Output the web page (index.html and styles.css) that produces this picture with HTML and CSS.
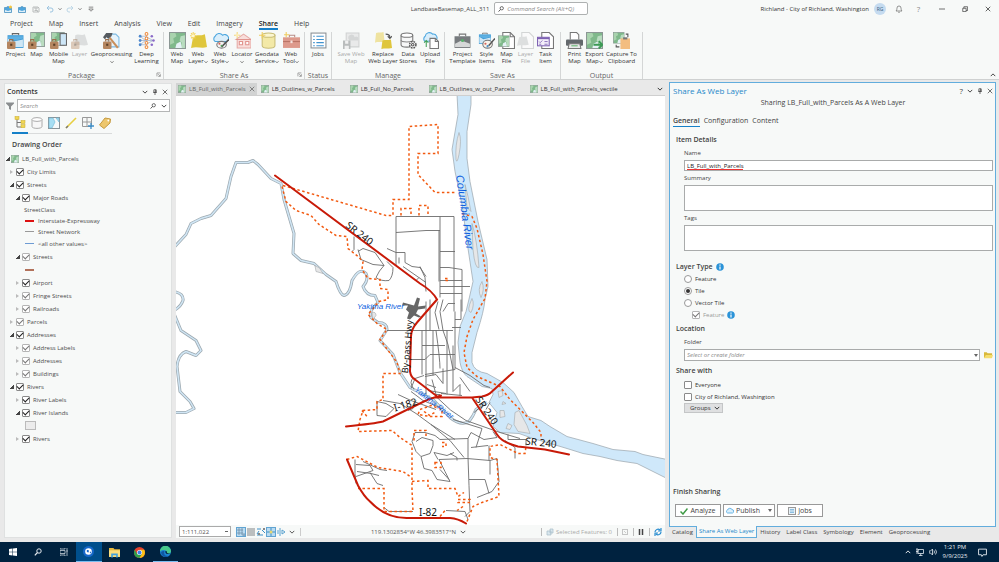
FILE: index.html
```html
<!DOCTYPE html>
<html lang="en">
<head>
<meta charset="utf-8">
<title>LandbaseBasemap_ALL_311</title>
<link rel="stylesheet" href="styles.css">
</head>
<body>
<svg class="defs" aria-hidden="true">
  <symbol id="bag" viewBox="0 0 16 16"><path d="M2.5 9V7.2h3V9" fill="none" stroke="#9a6f4c"/><rect x="0" y="9" width="8" height="7" rx="1" fill="#b58660"/><rect x="3" y="11" width="2" height="2" fill="#5c4028"/></symbol>
  <symbol id="mapsq" viewBox="0 0 16 16"><rect x=".5" y=".5" width="15" height="15" fill="#7fb98b" stroke="#8b9794"/><path d="M1 1h5l1 3-3 2 1 4-4 2z" fill="#a9d3ae"/><path d="M15 3l-4 1-1 4 2 2-1 5h4z" fill="#b9dcc0"/><path d="M6 15l1-4 4-2 1 6z" fill="#e5f1f6"/></symbol>
  <symbol id="project" viewBox="0 0 16 16"><path d="M5 3V1.5h6V3" fill="none" stroke="#666"/><rect x=".5" y="3" width="15" height="12" fill="#3f9bd6"/><path d="M1 6l5 3 9-2v7H1z" fill="#cfe7f5"/><path d="M1 4h14v2L8 8 1 6z" fill="#5eb0e2"/></symbol>
  <symbol id="i-project" viewBox="0 0 16 16"><use href="#project"/><use href="#bag"/></symbol>
  <symbol id="i-map" viewBox="0 0 16 16"><svg x="2" y="0" width="14" height="14"><use href="#mapsq"/></svg><use href="#bag"/></symbol>
  <symbol id="i-mobile" viewBox="0 0 16 16"><svg x="1" y="0" width="13" height="13"><use href="#mapsq"/></svg><rect x="9.500" y="1.500" width="6" height="11" fill="#cde6f7" stroke="#666"/><use href="#bag"/></symbol>
  <symbol id="i-layer" viewBox="0 0 16 16"><path d="M4 3c3-2 6 1 9-1l3 10c-4 2-8-1-13 1z" fill="#dcdede"/><g opacity=".4"><use href="#bag"/></g></symbol>
  <symbol id="i-geo" viewBox="0 0 16 16"><path d="M5 2h7l3 3v9H5z" fill="#e6f3fb" stroke="#7ebce4"/><path d="M6 5l8 10" stroke="#c98f5b" stroke-width="2"/><path d="M0 5l3-4 6 0-1 3-3 2-2-1-1 2z" fill="#555b60"/><use href="#bag"/></symbol>
  <symbol id="i-deep" viewBox="0 0 16 16"><path d="M2 4h5l7 4-7 4H2l5-4zM2 8h12M8 1v14" fill="none" stroke="#a8b7cf" stroke-width=".8"/><g fill="#5089ce"><circle cx="2" cy="4" r="1.300"/><circle cx="2" cy="8" r="1.300"/><circle cx="2" cy="12" r="1.300"/></g><g fill="#fff" stroke="#ee8a3c"><circle cx="8" cy="1.800" r="1.300"/><circle cx="8" cy="6" r="1.300"/><circle cx="8" cy="10.200" r="1.300"/><circle cx="8" cy="14.200" r="1.300"/></g><g fill="#8a6ac8"><circle cx="13" cy="4" r="1.200"/><circle cx="14.600" cy="8" r="1.200"/><circle cx="13" cy="12" r="1.200"/></g></symbol>
  <symbol id="i-weblayer" viewBox="0 0 16 16"><path d="M3 4c4-2 7 0 11-2l2 12c-5 2-9-1-15 1z" fill="#dfc63c"/><path d="M3 0v7M0 3.500h6M1 1l4 5M5 1L1 6" stroke="#f4d35c"/><circle cx="3" cy="3.500" r="1.500" fill="#fff7cf"/></symbol>
  <symbol id="i-webstyle" viewBox="0 0 16 16"><path d="M3 9a3 3 0 0 1 0-5 4 4 0 0 1 7-1 3.500 3.500 0 0 1 4 6z" fill="#d9eefb" stroke="#4ba6df"/><ellipse cx="9" cy="12" rx="4.500" ry="3.200" fill="#f5f5f5" stroke="#777"/><path d="M16 7l-7 7" stroke="#555" stroke-width="1.500"/><circle cx="7" cy="11" r="1" fill="#d76459"/><circle cx="9" cy="13" r="1" fill="#56a05f"/></symbol>
  <symbol id="i-locator" viewBox="0 0 16 16"><path d="M2 7l7-5 7 5v8H3V7z" fill="#f8dedb" stroke="#e6aaa5"/><path d="M2 7h14M5 9h3v3H5zM11 9h3v3h-3z" fill="#fff" stroke="#e1938d"/><path d="M3 0v6M0 3h6" stroke="#f4d67a"/><circle cx="3" cy="3" r="1.400" fill="#fcecb6"/></symbol>
  <symbol id="i-geodata" viewBox="0 0 16 16"><path d="M3 3v10c0 3 12 3 12 0V3z" fill="#f3e9a7" stroke="#c9bd76"/><ellipse cx="9" cy="3" rx="6" ry="2" fill="#fbf6d2" stroke="#c9bd76"/><path d="M3 0v6M0 3h6" stroke="#f0cd5e"/></symbol>
  <symbol id="i-webtool" viewBox="0 0 16 16"><path d="M6 5V3h5v2" fill="none" stroke="#b88d86"/><rect x="0" y="5" width="16" height="10" fill="#dd9a8c"/><path d="M0 9h16" stroke="#b97467"/><rect x="7" y="8" width="2" height="2.500" fill="#f6e5e1"/><path d="M3 0v5M1 2.500h5" stroke="#f0cd5e"/></symbol>
  <symbol id="i-jobs" viewBox="0 0 16 16"><rect x="1" y="1" width="14" height="14" fill="#fff" stroke="#8a9095"/><path d="M3 4h1.500M3 7h1.500M3 10h1.500M3 13h1.500M6 4h7M6 7h7M6 10h7M6 13h7" stroke="#3f93cf"/></symbol>
  <symbol id="i-savemap" viewBox="0 0 16 16"><path d="M3 1h12v13H3z" fill="#e9eaea" stroke="#d0d2d2"/><path d="M5 6a3 3 0 0 1 6-1 2 2 0 0 1 3 3H6z" fill="#d5d7d7"/><path d="M0 8h7v8H0z" fill="#b9bcbc"/><path d="M2 8h3v3H2zM1.500 13h4v3h-4z" fill="#f0f0f0"/></symbol>
  <symbol id="i-replace" viewBox="0 0 16 16"><path d="M1 1c3-1 4 0 7-1l1 9c-4 1-6 0-9 1z" fill="#efe3a0"/><path d="M7 8c3-1 5 0 8-1l1 8c-4 1-7 0-10 1z" fill="#dfc63c"/><path d="M10 2c3 0 4 1 4 3M12 4l2 2 2-2" fill="none" stroke="#555"/></symbol>
  <symbol id="i-stores" viewBox="0 0 16 16"><path d="M1 3v9c0 3 11 3 11 0V3" fill="#f7f8f8" stroke="#777"/><ellipse cx="6.500" cy="3" rx="5.500" ry="2" fill="#fff" stroke="#777"/><path d="M1 7.500c0 2.500 11 2.500 11 0" fill="none" stroke="#888"/><circle cx="12" cy="12" r="3" fill="#fff" stroke="#555" stroke-width="1.400" stroke-dasharray="1.600 .8"/><circle cx="12" cy="12" r="1.200" fill="none" stroke="#555"/></symbol>
  <symbol id="i-upload" viewBox="0 0 16 16"><path d="M3 9a3 3 0 0 1 0-5 4 4 0 0 1 7-2 3.500 3.500 0 0 1 3 6z" fill="#d9eefb" stroke="#4ba6df"/><path d="M7.500 6h5l3 3v6.500h-8z" fill="#fff" stroke="#777"/><path d="M12.500 6v3h3" fill="none" stroke="#777"/><path d="M4 14V8M2 10l2-2 2 2" fill="none" stroke="#45a05a"/></symbol>
  <symbol id="i-template" viewBox="0 0 16 16"><path d="M5 4V2h6v2" fill="none" stroke="#777"/><rect x=".5" y="4" width="15" height="11" fill="#777b7e"/><path d="M1 11l6-3 8 3v3H1z" fill="#d6d8d8"/><circle cx="8" cy="8" r="1.500" fill="#58b06c"/></symbol>
  <symbol id="i-styles" viewBox="0 0 16 16"><svg width="13" height="12"><use href="#project"/></svg><ellipse cx="9" cy="11.500" rx="4.500" ry="3.700" fill="#f9f3ea" stroke="#777"/><path d="M16 6l-6 7" stroke="#555" stroke-width="1.400"/><circle cx="7" cy="11" r="1" fill="#d76459"/><circle cx="9" cy="13.300" r="1" fill="#4b93cd"/></symbol>
  <symbol id="i-mapfile" viewBox="0 0 16 16"><path d="M4.500.5h7l4 4v11h-11z" fill="#fff" stroke="#777"/><path d="M11.500.5v4h4" fill="none" stroke="#777"/><svg x="0" y="3" width="11" height="11"><use href="#mapsq"/></svg></symbol>
  <symbol id="i-layerfile" viewBox="0 0 16 16"><path d="M4.500.5h7l4 4v11h-11z" fill="#fafafa" stroke="#d3d5d5"/><path d="M2 5c3-1 5 0 7-1l2 8c-4 1-7 0-11 1z" fill="#dddfdf"/></symbol>
  <symbol id="i-task" viewBox="0 0 16 16"><path d="M4.500.5h7l4 4v11h-11z" fill="#fff" stroke="#777"/><rect x=".5" y="5" width="11" height="8" fill="#f4effa" stroke="#7e62b3"/><path d="M.5 6h11" stroke="#7e62b3" stroke-width="1.500"/><path d="M2 9l1 1 2-2M7 9h3M2 11.500h2M7 11.500h3" fill="none" stroke="#7e62b3" stroke-width=".8"/></symbol>
  <symbol id="i-print" viewBox="0 0 16 16"><path d="M4 7V.5h6l2 2V7" fill="#fff" stroke="#777"/><rect x="0" y="7" width="16" height="6" rx="1" fill="#63686c"/><path d="M3 11h10l1 4.500H2z" fill="#e9eaea" stroke="#777"/><path d="M5 13h6" stroke="#61b56f"/></symbol>
  <symbol id="i-export" viewBox="0 0 16 16"><use href="#mapsq"/><path d="M7 12h8M12 8.500l3.500 3.500-3.500 3.500" fill="none" stroke="#3d9a56" stroke-width="1.700"/></symbol>
  <symbol id="i-capture" viewBox="0 0 16 16"><svg width="11" height="11"><use href="#mapsq"/></svg><rect x="7" y="6" width="9" height="10" fill="#f3bd80"/><rect x="9.500" y="5" width="4" height="2" fill="#777"/><path d="M3 12v2h3M12 2h2v3" fill="none" stroke="#555"/></symbol>
  <symbol id="chev" viewBox="0 0 8 8"><path d="M1 2.500l3 3 3-3" fill="none" stroke="currentColor" stroke-width="1.300"/></symbol>
  <symbol id="close" viewBox="0 0 8 8"><path d="M1 1l6 6M7 1L1 7" fill="none" stroke="currentColor"/></symbol>
  <symbol id="pin" viewBox="0 0 8 8"><path d="M2.500 1h3v3.500h-3zM1.500 4.500h5M4 4.500V8M4.900 1v3" fill="none" stroke="currentColor"/></symbol>
  <symbol id="mag" viewBox="0 0 8 8"><circle cx="5" cy="3" r="2.200" fill="none" stroke="currentColor"/><path d="M3.500 4.500L.8 7.400" stroke="currentColor" stroke-width="1.200"/></symbol>
  <symbol id="launch" viewBox="0 0 8 8"><path d="M1.500 7V1.500H7M3.500 3.500l3 3M7 3.500V7H3.500" fill="none" stroke="#777"/></symbol>
  <symbol id="info" viewBox="0 0 8 8"><circle cx="4" cy="4" r="3.800" fill="#2b93d8"/><path d="M4 1.500v1.200M4 3.400v3" stroke="#fff" stroke-width="1.200"/></symbol>
  <symbol id="pal" viewBox="0 0 8 8"><path d="M.5 2.500h2l.5-.8h2l.5.8h2v5h-7z" fill="#4fa5dc" stroke="#3b84b5" stroke-width=".6"/><path d="M1 5l3 1 3-1v2H1z" fill="#dff0fa"/></symbol>
</svg>

<div class="app">
  <header class="ribbon">
    <div class="titlebar">
      <div class="quick">
        <button aria-label="New project"><svg class="s8"><use href="#pal"/><circle cx="6.500" cy="2" r="1.500" fill="#f5c640"/></svg></button>
        <button aria-label="Open project"><svg class="s8"><use href="#pal"/></svg></button>
        <button aria-label="Save project"><svg class="s8" viewBox="0 0 8 8"><path d="M1 2h5l1 1v4H1zM3 2v2h2V2M2.500 5.500h3V7" fill="none" stroke="#b9bcbc"/></svg></button>
        <button aria-label="Undo"><svg class="s8" viewBox="0 0 8 8"><path d="M3 1L1 3l2 2M1 3h4a2 2 0 0 1 0 4H4" fill="none" stroke="#9cc4e0"/></svg></button>
        <button class="near" aria-label="Undo list"><svg class="s4"><use href="#chev"/></svg></button>
        <button class="near" aria-label="Redo"><svg class="s8" viewBox="0 0 8 8"><path d="M5 1l2 2-2 2M7 3H3a2 2 0 0 0 0 4h1" fill="none" stroke="#bcd6e6"/></svg></button>
        <button class="near" aria-label="Redo list"><svg class="s4"><use href="#chev"/></svg></button>
        <button aria-label="Customize"><svg class="s6" viewBox="0 0 8 8"><path d="M1 1.500h6M1 4h6L4 7z" fill="none" stroke="#666"/></svg></button>
      </div>
      <div class="doc"><span>LandbaseBasemap_ALL_311</span>
        <label class="command"><svg class="s6"><use href="#mag"/></svg><input type="text" placeholder="Command Search (Alt+Q)" aria-label="Command Search"></label>
      </div>
      <div class="account"><span>Richland - City of Richland, Washington</span><span class="avatar">RG</span>
        <button aria-label="Notifications"><svg class="s8" viewBox="0 0 8 8"><path d="M1 6c1-1 .8-2 1-3a2 2 0 0 1 4 0c.2 1 0 2 1 3zM3.200 7.300h1.600" fill="none" stroke="#666" stroke-width=".7"/></svg></button>
        <button class="help" aria-label="Help">?</button>
        <span class="win"><button aria-label="Minimize"><svg class="s6" viewBox="0 0 8 8"><path d="M0 4h8" stroke="#444"/></svg></button>
        <button aria-label="Restore"><svg class="s6" viewBox="0 0 8 8"><path d="M1 3h4.500v4.500H1zM2.500 3V1h5v5h-2" fill="none" stroke="#444"/></svg></button>
        <button aria-label="Close"><svg class="s6"><use href="#close"/></svg></button></span>
      </div>
    </div>
    <nav class="menu"><a href="#">Project</a><a href="#">Map</a><a href="#">Insert</a><a href="#">Analysis</a><a href="#">View</a><a href="#">Edit</a><a href="#">Imagery</a><a href="#" class="on">Share</a><a href="#">Help</a></nav>
    <div class="groups">
      <section class="group package"><div class="tools">
        <button><svg><use href="#i-project"/></svg>Project</button>
        <button><svg><use href="#i-map"/></svg>Map</button>
        <button><svg><use href="#i-mobile"/></svg>Mobile<br>Map</button>
        <button class="off"><svg><use href="#i-layer"/></svg>Layer</button>
        <button><svg><use href="#i-geo"/></svg>Geoprocessing<span><svg class="c"><use href="#chev"/></svg></span></button>
        <button><svg><use href="#i-deep"/></svg>Deep<br>Learning</button>
      </div><h3>Package<svg class="launch"><use href="#launch"/></svg></h3></section>
      <section class="group shareas"><div class="tools">
        <button><svg><use href="#mapsq"/></svg>Web<br>Map</button>
        <button><svg><use href="#i-weblayer"/></svg>Web<span>Layer<svg class="c"><use href="#chev"/></svg></span></button>
        <button><svg><use href="#i-webstyle"/></svg>Web<span>Style<svg class="c"><use href="#chev"/></svg></span></button>
        <button><svg><use href="#i-locator"/></svg>Locator<span><svg class="c"><use href="#chev"/></svg></span></button>
        <button><svg><use href="#i-geodata"/></svg>Geodata<span>Service<svg class="c"><use href="#chev"/></svg></span></button>
        <button><svg><use href="#i-webtool"/></svg>Web<span>Tool<svg class="c"><use href="#chev"/></svg></span></button>
      </div><h3>Share As<svg class="launch"><use href="#launch"/></svg></h3></section>
      <section class="group status"><div class="tools"><button><svg><use href="#i-jobs"/></svg>Jobs</button></div><h3>Status</h3></section>
      <section class="group manage"><div class="tools">
        <button class="off"><svg><use href="#i-savemap"/></svg>Save Web<br>Map</button>
        <button><svg><use href="#i-replace"/></svg>Replace<br>Web Layer</button>
        <button><svg><use href="#i-stores"/></svg>Data<br>Stores</button>
        <button><svg><use href="#i-upload"/></svg>Upload<br>File</button>
      </div><h3>Manage</h3></section>
      <section class="group saveas"><div class="tools">
        <button><svg><use href="#i-template"/></svg>Project<br>Template</button>
        <button><svg><use href="#i-styles"/></svg>Style<br>Items</button>
        <button><svg><use href="#i-mapfile"/></svg>Map<br>File</button>
        <button class="off"><svg><use href="#i-layerfile"/></svg>Layer<br>File</button>
        <button><svg><use href="#i-task"/></svg>Task<br>Item</button>
      </div><h3>Save As</h3></section>
      <section class="group output"><div class="tools">
        <button><svg><use href="#i-print"/></svg>Print<br>Map</button>
        <button><svg><use href="#i-export"/></svg>Export<span>Map<svg class="c"><use href="#chev"/></svg></span></button>
        <button><svg><use href="#i-capture"/></svg>Capture To<br>Clipboard</button>
      </div><h3>Output</h3></section>
      <button class="collapse" aria-label="Collapse ribbon"><svg class="s6"><use href="#chev"/></svg></button>
    </div>
  </header>

  <main class="dock">
    <aside class="contents">
      <div class="panehead"><h2>Contents</h2><span class="paneicons"><button aria-label="Menu"><svg class="s6"><use href="#chev"/></svg></button><button aria-label="Pin"><svg class="s6"><use href="#pin"/></svg></button><button aria-label="Close"><svg class="s6"><use href="#close"/></svg></button></span></div>
      <div class="searchrow"><svg class="s8" viewBox="0 0 8 8"><path d="M0 .5h8v1L5 4.500V8L3 7V4.500L0 1.500z" fill="#8a8d8f"/></svg>
        <label class="search"><input type="text" placeholder="Search" aria-label="Search"><svg class="s6"><use href="#mag"/></svg><svg class="s6"><use href="#chev"/></svg></label></div>
      <div class="views">
        <button class="on" aria-label="Drawing order"><svg viewBox="0 0 12 12"><path d="M3 3v8h5M3 6.500h5" fill="none" stroke="#777"/><g fill="#f0d653" stroke="#c7aa2a" stroke-width=".5"><rect x="1" y=".5" width="4" height="3"/><rect x="7" y="4.500" width="4" height="3"/><rect x="7" y="8.700" width="4" height="3"/></g></svg></button>
        <button aria-label="Data source"><svg viewBox="0 0 12 12"><path d="M1 2.500v7c0 2.500 10 2.500 10 0v-7" fill="#f7f7f7" stroke="#aaa"/><ellipse cx="6" cy="2.500" rx="5" ry="1.900" fill="#fff" stroke="#aaa"/></svg></button>
        <button aria-label="Selection"><svg viewBox="0 0 12 12"><rect x=".5" y=".5" width="11" height="11" fill="#f5f8f9" stroke="#8a9499"/><path d="M1 1h4l2 4-3 6H1zM8 1l3 0v4z" fill="#a7def3" stroke="#6eb6d4" stroke-width=".6"/></svg></button>
        <button aria-label="Editing"><svg viewBox="0 0 12 12"><path d="M1 11L11 1" stroke="#e7ce41" stroke-width="1.600"/><path d="M1 11l2-2" stroke="#777" stroke-width="1.400"/></svg></button>
        <button aria-label="Snapping"><svg viewBox="0 0 12 12"><path d="M.5.5h9v9h-9zM5 .5v9M.5 5h9" fill="none" stroke="#999"/><path d="M9 6v6M6 9h6" stroke="#3e8fc9" stroke-width="1.300"/></svg></button>
        <button aria-label="Labeling"><svg viewBox="0 0 12 12"><path d="M.5 8L6 1l5.500 1L11 6l-6 5.500z" fill="#edc66c" stroke="#c59a40"/><circle cx="9.300" cy="3.500" r=".9" fill="#fff"/></svg></button>
      </div>
      <h3 class="order">Drawing Order</h3>
      <ul class="tree">
        <li class="row l0"><i class="open"></i><svg class="s8"><use href="#mapsq"/></svg>LB_Full_with_Parcels</li>
        <li class="row l1"><i></i><label><input type="checkbox" checked>City Limits</label></li>
        <li class="row l1"><i class="open"></i><label><input type="checkbox" checked>Streets</label></li>
        <li class="row l2"><i class="open"></i><label><input type="checkbox" checked>Major Roads</label></li>
        <li class="leg head">StreetClass</li>
        <li class="leg"><b class="sw"></b>Interstate-Expressway</li>
        <li class="leg"><b class="sw gray"></b>Street Network</li>
        <li class="leg tall"><b class="sw blue"></b>&lt;all other values&gt;</li>
        <li class="row l2"><i class="open"></i><label><input class="soft" type="checkbox" checked>Streets</label></li>
        <li class="leg tall"><b class="sw brown"></b></li>
        <li class="row l2"><i></i><label><input type="checkbox" checked>Airport</label></li>
        <li class="row l2"><i></i><label><input class="soft" type="checkbox" checked>Fringe Streets</label></li>
        <li class="row l2"><i></i><label><input class="soft" type="checkbox" checked>Railroads</label></li>
        <li class="row l1"><i></i><label><input class="soft" type="checkbox" checked>Parcels</label></li>
        <li class="row l1"><i class="open"></i><label><input type="checkbox" checked>Addresses</label></li>
        <li class="row l2"><i></i><label><input class="soft" type="checkbox" checked>Address Labels</label></li>
        <li class="row l2"><i></i><label><input class="soft" type="checkbox" checked>Addresses</label></li>
        <li class="row l2"><i></i><label><input class="soft" type="checkbox" checked>Buildings</label></li>
        <li class="row l1"><i class="open"></i><label><input type="checkbox" checked>Rivers</label></li>
        <li class="row l2"><i></i><label><input type="checkbox" checked>River Labels</label></li>
        <li class="row l2"><i class="open"></i><label><input type="checkbox" checked>River Islands</label></li>
        <li class="leg tall"><b class="box"></b></li>
        <li class="row l2"><i></i><label><input type="checkbox" checked>Rivers</label></li>
      </ul>
    </aside>

    <section class="mapview">
      <div class="maptabs">
        <button class="on"><svg class="s8"><use href="#mapsq"/></svg>LB_Full_with_Parcels<svg class="s6"><use href="#close"/></svg></button>
        <button><svg class="s8"><use href="#mapsq"/></svg>LB_Outlines_w_Parcels</button>
        <button><svg class="s8"><use href="#mapsq"/></svg>LB_Full_No_Parcels</button>
        <button><svg class="s8"><use href="#mapsq"/></svg>LB_Outlines_w_out_Parcels</button>
        <button><svg class="s8"><use href="#mapsq"/></svg>LB_Full_with_Parcels_vectile</button>
        <svg class="s6 more"><use href="#chev"/></svg>
      </div>
      <svg class="map" viewBox="176 96 489 430" preserveAspectRatio="xMidYMid slice" role="img" aria-label="Map of Richland">
        <g class="yakima">
          <path id="yk" d="M174 248L186 235 191 224 201 219 211 216 226 199 231 177 236 163 248 163 253 161 258 165 271 179 281 184 284 200 294 234 293 254 301 261 314 264 326 275 336 282 Q340 295 344 296 Q350 295 352 281 Q360 267 366 274 Q369 280 363 287 Q366 296 375 296 L378 303 Q368 312 371 318 L378 323Q387 323 387 330L380 341 393 355 400 373 410 388 433 400 450 418Q461 427 469 422 473 417 476 410L487 403"/>
          <path id="yk2" d="M174 292Q184 294 183 301 181 307 174 311M174 314L181 331 196 341 201 351 196 356 186 352Q178 355 177 367L180 392 190 402 194 409 186 413 174 413"/>
          <g class="inner"><use href="#yk"/><use href="#yk2"/></g>
        </g>
        <g class="water">
          <path d="M457 94L458 115 452 150 455 172 462 205 468 249 473 282 Q469 300 466 312L460 327 458 343 460 363 Q462 373 467 377L482 387 492 389 493 395 489 403 497 413 493 427 500 433 519 434 533 439 547 443 567 449 583 454 600 457 617 461 637 464 653 472 667 479V460L643 455 635 452 613 450 593 444 567 437 550 427 541 421 528 417 522 407 514 393 503 383 487 374Q474 372 472 363L472 353 477 333Q484 312 485 300L488 287 487 260 478 222 470 182 467 159 467 132 471 105 471 94z"/>
        </g>
        <g class="island">
          <path d="M459 133Q462 140 459 155 457 165 456 160 455 145 459 133zM465 185L468 197 471 212 467 208zM472 224Q477 240 479 268 475 270 473 250zM482 282Q485 290 481 298 477 290 482 282zM472 299Q475 305 471 313 466 312 472 299zM515 413L519 411 527 426 530 434 518 432 514 425zM498 392l4-1 1 5-4 2zM500 411l4 0 1 6-5 1zM508 424l4 2-2 4-4-1zM503 402l3 2-4 1zM372 313q4-1 4 3l-3 4zM315 266q5 1 8 8l-7-2z"/>
        </g>
        <g class="street">
          <path d="M354 237V250L352 252M358 250L361 260 373 265 384 266 375 253 363 249 358 252M384 266Q379 271 376 278 381 282 389 281 393 277 393 268L387 262M387 249L396 253H405V263L412 267 420 268 426 277M399 258V264M403 267L426 283M416 281l3-3M396 217V266M396 233L426 231 440 231M396 217H454V312M440 217V298M439 231V282M440 252H455M440 268L449 268 462 270V312M440 281H462M440 287H470M440 294H462M443 312L448 304H455M420 267L425 278 426 292M387 331H453M422 331V346M433 331V376M443 300L440 312 443 331 448 345 453 370M455 312V370M438 302L435 313 439 330M422 346H445M410 360L425 360 430 355H455M422 346L422 375M425 375L455 370M425 377L436 375 443 384M443 369V384M453 346L453 392M455 368L470 376 484 386 490 388M460 378L470 392M411 389L415 379 424 376M432 380L436 395 440 395M427 385L436 388M398 395L411 401 436 410M383 401L400 404 416 414 431 425 450 441 464 458M377 402V416L386 417 394 409 386 404 377 402M416 401L413 409 408 411M414 378Q408 382 414 390M436 397Q450 412 466 421L500 433 520 439M493 432L497 438M508 435V440H526V446M515 459V448L505 441M415 433H425L435 436 440 440 468 439 471 433 484 440 497 438M415 433L412 442 416 452 421 457 430 454 433 446 433 441 422 438 416 442M421 457L424 469 432 471 437 480 450 482 445 472 439 460 467 459 490 461 497 459 499 482 492 492 477 498M438 460L434 453 447 456 454 453M457 461V458L450 454M468 439V458L469 486 470 512 465 517M469 480L485 480 489 494M490 461L490 475M440 470L449 480M446 511L465 512 468 520M471 448L488 446M453 420L482 429 476 448M431 425L455 440M355 460V474L356 484M356 465L370 466 373 471 356 477M363 462L380 470 387 471M370 473L377 484 383 486M384 508L389 512 413 512M357 472 L371 474 379 476"/>
          <path d="M426 302V395M430 300V331M447 331L447 395M436 331Q440 360 440 369M460 396V385L453 392M441 394L462 396M428 391L446 394M411 392L423 401 440 408M490 403L486 410M474 413L481 407M489 461V446M455 320H461V300M461 328H452"/>
        </g>
        <path class="airport" d="M403 303l11 3 3-8 3 1-2 8 8-1-1 3-7 1-2 4 5 3-2 1-5-2-4 4-3-1 2-6-3-3 2-4-6 0z"/>
        <g class="limit">
          <path d="M283 186L386 216H393V200H409V127L438 125V154H418V175L435 193H456M401 216V209H411V216M419 216V206H428V216M462 214L472 217 477 229 483 255 487 282 485 299 473 320 467 337 464 353 467 368 477 377 500 387 510 400 533 423 541 433V440"/>
          <path d="M282 187L286 202 296 211 311 216 319 225 336 236 347 237 348 249 358 257 363 262 362 270 368 279 380 280 380 289 388 290V300L379 302 368 315 377 324 387 330 380 340 397 363 400 374H383V400L377 402V410L363 411 360 420 358 432 392 431 400 438 412 446V490L413 512H384V489H358M347 460L357 457 378 468 403 472 410 477M362 411l5 6M412 482L428 481V489H455L458 497 464 493M414 441V431H426V438M435 463H441V468H435zM442 443h4v4h-4M420 410L431 406 442 410V417L430 417 418 415zM424 412l6 4 6-4M440 517L445 511M467 522L473 507 482 503 499 497 497 460 490 458V447L500 445 518 454 525 454 526 447M458 500h12v3h-12zM463 507l-6 4"/>
          <path d="M445 279h3v2h-3z"/>
        </g>
        <g class="highway">
          <path d="M275 176L420 284Q432 291 437 300L417 323Q411 330 411 337L410 372Q411 378 415 380L436 396M346 427Q375 424 383 422L428 400 441 396M434 398H472L482 397Q488 396 492 392L513 373M472 398L497 435Q502 443 518 447L545 450 569 455M347 460L358 486Q364 497 370 502 387 520 410 518.500H450Q458 519 466 524"/>
        </g>
        <g class="roadname">
          <text transform="translate(345 227) rotate(38)">SR 240</text>
          <text class="small" transform="translate(408 374) rotate(-85)">By-pass Hwy</text>
          <text transform="translate(395 412) rotate(-17)">I-182</text>
          <text transform="translate(475 400) rotate(56)">SR 240</text>
          <text transform="translate(525 445) rotate(6)">SR 240</text>
          <text x="419" y="516">I-82</text>
        </g>
        <g class="rivername">
          <text x="357" y="309">Yakima River</text>
          <text transform="translate(414 391) rotate(38)">Yakima River</text>
          <text class="big" transform="translate(456 176) rotate(82)">Columbia River</text>
        </g>
      </svg>
      <div class="mapstatus">
        <select class="scale" aria-label="Scale"><option>1:111,022</option></select>
        <span class="toggles"><svg class="lit" viewBox="0 0 10 10"><path d="M1 3h6M1 6h6M3 1v7M6 1v7M8 6v4M6 8h4" stroke="#6e90a8" stroke-width=".8"/></svg><svg viewBox="0 0 10 10"><rect x="1" y="1" width="8" height="8" fill="#bbbebf"/></svg><svg viewBox="0 0 10 10"><path d="M1 2h4M1 8h6M6 3l3 3M3 4l-2 3" stroke="#3c8fc7"/><path d="M7 1h2v2H7zM2 6h2v2H2z" fill="#888"/></svg><svg class="lit" viewBox="0 0 10 10"><path d="M1 5h8M5 1v8" stroke="#3c8fc7"/><circle cx="5" cy="5" r="1.500" fill="#e9d770"/></svg><svg viewBox="0 0 10 10"><path d="M2 3v4M4 1v8M6 3l3 2-3 2z" stroke="#5aa2cf" fill="none"/></svg><svg class="s6"><use href="#chev"/></svg></span>
        <span class="coords">119.1302854°W 46.3983517°N <svg class="s6"><use href="#chev"/></svg></span>
        <span class="sel"><svg class="s8" viewBox="0 0 8 8"><path d="M1 3h4v4H1zM4 1h3v4H4z" fill="#d9e7ee" stroke="#a8bcc7" stroke-width=".7"/></svg>Selected Features: 0</span>
        <span class="cell"><svg class="s6" viewBox="0 0 8 8"><path d="M.5 .5h7v7h-7zM3 3l2 2" fill="none" stroke="#aaa"/></svg></span>
        <span class="cell"><svg class="s6" viewBox="0 0 8 8"><path d="M2 0v8M6 0v8" stroke="#444" stroke-width="2"/></svg></span>
        <span class="cell"><svg class="s8" viewBox="0 0 8 8"><path d="M1 4a3 3 0 0 1 5-2M7 0v3H4M7 4a3 3 0 0 1-5 2M1 8V5h3" fill="none" stroke="#2a8dd0" stroke-width="1.200"/></svg></span>
      </div>
    </section>

    <aside class="side">
      <form class="share" onsubmit="return false">
        <div class="panehead"><h2>Share As Web Layer</h2><span class="paneicons"><button type="button" class="q" aria-label="Help">?</button><button type="button" aria-label="Menu"><svg class="s6"><use href="#chev"/></svg></button><button type="button" aria-label="Pin"><svg class="s6"><use href="#pin"/></svg></button><button type="button" aria-label="Close"><svg class="s6"><use href="#close"/></svg></button></span></div>
        <p class="sharing">Sharing LB_Full_with_Parcels As A Web Layer</p>
        <nav class="steps"><a href="#" class="on">General</a><a href="#">Configuration</a><a href="#">Content</a></nav>
        <div class="body">
          <h3 class="details">Item Details</h3>
          <div class="fields">
            <label for="name">Name</label><input id="name" type="text" value="LB_Full_with_Parcels" spellcheck="false">
            <label for="summary">Summary</label><textarea id="summary"></textarea>
            <label for="tags">Tags</label><textarea id="tags"></textarea>
          </div>
          <h3 class="ltype">Layer Type <svg class="s8"><use href="#info"/></svg></h3>
          <div class="opts">
            <label><input type="radio" name="t">Feature</label>
            <label><input type="radio" name="t" checked>Tile</label>
            <label><input type="radio" name="t">Vector Tile</label>
            <label class="sub"><input class="soft" type="checkbox" checked disabled>Feature <svg class="s8"><use href="#info"/></svg></label>
          </div>
          <h3 class="loc">Location</h3>
          <div class="fields"><label for="folder">Folder</label>
            <div class="folder"><span class="selwrap"><select id="folder"><option>Select or create folder</option></select></span><svg viewBox="0 0 10 8"><path d="M0 1h3l1 1h5v5H0z" fill="#d9b93a"/><path d="M2 4h8L8.500 7.500H0z" fill="#f5dd6d"/></svg></div></div>
          <h3 class="with">Share with</h3>
          <div class="opts"><label><input type="checkbox">Everyone</label><label><input type="checkbox">City of Richland, Washington</label></div>
          <button type="button" class="groupsbtn">Groups <svg class="s6"><use href="#chev"/></svg></button>
        </div>
        <h3 class="finish">Finish Sharing</h3>
        <div class="actions">
          <button type="button"><svg class="s8" viewBox="0 0 8 8"><path d="M.5 4.500L3 7l4.500-5.500" fill="none" stroke="#3e9a45" stroke-width="1.500"/></svg>Analyze</button>
          <button type="button" class="wide"><svg class="s8" viewBox="0 0 8 8"><path d="M1.500 6a1.600 1.600 0 0 1 0-3 2.500 2.500 0 0 1 4.500-.5A1.800 1.800 0 0 1 6.500 6z" fill="#d9eefb" stroke="#4ba6df" stroke-width=".8"/></svg>Publish<em></em></button>
          <button type="button"><svg class="s8" viewBox="0 0 8 8"><rect x=".5" y=".5" width="7" height="7" fill="#e8f2f8" stroke="#999"/><path d="M2 2.500h4M2 4h4M2 5.500h4" stroke="#4b9bd1" stroke-width=".6"/></svg>Jobs</button>
        </div>
      </form>
      <nav class="panes"><a href="#">Catalog</a><a href="#" class="on">Share As Web Layer</a><a href="#">History</a><a href="#">Label Class</a><a href="#">Symbology</a><a href="#">Element</a><a href="#">Geoprocessing</a></nav>
    </aside>
  </main>

  <footer class="taskbar">
    <div class="apps">
    <button aria-label="Start"><svg viewBox="0 0 8 8"><path d="M0 1l3.500-.5v3.200H0zM4 .5L8 0v3.700H4zM0 4.200h3.500v3.300L0 7zM4 4.200h4V8l-4-.5z" fill="#fff"/></svg></button>
    <button aria-label="Search"><svg viewBox="0 0 8 8"><use href="#mag"/></svg></button>
    <button aria-label="Task view"><svg viewBox="0 0 8 8"><path d="M0 2.500h5v3H0zM0 0v1h5V0M0 8V7h5v1M7 0v8M6.300 3h1.500" fill="none" stroke="#dfe6ec" stroke-width=".7"/></svg></button>
    <button class="on" aria-label="ArcGIS Pro"><svg class="s10" viewBox="0 0 10 10"><circle cx="5" cy="5" r="5" fill="#1668c9"/><circle cx="5" cy="5" r="3" fill="#fff"/><path d="M3.500 3.500l2 .5-.5 2-1.500-.5zM6 5.500l1.500-.5-.5 2z" fill="#1668c9"/></svg></button>
    <button aria-label="File Explorer"><svg class="s10" viewBox="0 0 10 10"><path d="M0 1h4l1 1h5v7H0z" fill="#e9b83c"/><path d="M0 3h10v6H0z" fill="#fbdd7e"/><path d="M2 6h6v3.500H6.500V7.500h-3v2H2z" fill="#40a0dd"/></svg></button>
    <button aria-label="Chrome"><svg class="s10" viewBox="0 0 10 10"><circle cx="5" cy="5" r="5" fill="#e2402f"/><path d="M.7 2.500A5 5 0 0 0 5 10l2.200-3.700H2.800z" fill="#2ba24c"/><path d="M5 10a5 5 0 0 0 4.300-7.500H5l2.200 3.800z" fill="#fbc116"/><circle cx="5" cy="5" r="2.300" fill="#fff"/><circle cx="5" cy="5" r="1.800" fill="#3f7fe8"/></svg></button>
    <button class="running" aria-label="Edge"><svg class="s10" viewBox="0 0 10 10"><circle cx="5" cy="5" r="5" fill="#1a83cf"/><path d="M0 5A5 5 0 0 1 10 4.500C10 7 7 7.500 6 6.500 7 4 3 2.500 0 5z" fill="#48c98b"/><path d="M4 5c-1 3 1 4.500 4 4-3 2.500-7 0-7-3 0-1 2-2 3-1z" fill="#0f57a3"/><path d="M5 4.500c1 0 1.500.5 1.200 1.500.5 1 2 1 3 .8-2 1.200-5 .2-4.200-2.300z" fill="#00223f"/></svg></button>
    </div>
    <div class="tray">
      <svg class="up s6"><use href="#chev"/></svg>
      <svg class="s8" viewBox="0 0 8 8"><path d="M2 1.500h5.500v4H2zM3 7.500h3.500M4.700 5.500v2M0 1h2v2.500H0zM1 3.500V6" fill="none" stroke="#e5ebf0" stroke-width=".8"/></svg>
      <svg class="s8" viewBox="0 0 8 8"><path d="M0 3h1.500L3.500 1v6L1.500 5H0zM5 2.500q1 1.500 0 3M6.500 1.500q2 2.500 0 5" fill="none" stroke="#e5ebf0" stroke-width=".8"/></svg>
      <span class="clock">1:21 PM<br>9/9/2025</span>
      <svg class="note" viewBox="0 0 8 8"><path d="M.5 1h7v5H4.500L3.500 7.500 3 6H.5z" fill="none" stroke="#e5ebf0" stroke-width=".8"/></svg>
    </div>
  </footer>
</div>
</body>
</html>
```

FILE: styles.css
```css
* { box-sizing: border-box; }
html, body { height: 100%; }
body { margin: 0; font: 6px/8px "Open Sans", "Noto Sans", sans-serif; color: #444; background: #e9e9e9; overflow: hidden; }
button, input, select, textarea { font: inherit; color: inherit; margin: 0; }
button { border: 0; padding: 0; background: none; }
h2, h3, p, ul { margin: 0; padding: 0; font-weight: 400; }
ul { list-style: none; }
a { color: inherit; text-decoration: none; }
svg { display: block; flex: none; }
.defs { position: absolute; width: 0; height: 0; }
.s4 { width: 4px; height: 4px; }
.s6 { width: 6px; height: 6px; }
.s8 { width: 8px; height: 8px; }
.s10 { width: 10px; height: 10px; }

.app { height: 100vh; display: flex; flex-direction: column; }

/* ribbon */
.ribbon { background: #f7f9f8; border-bottom: 1px solid #cfd1d1; height: 80px; flex: none; display: flex; flex-direction: column; }
.titlebar { display: grid; grid-template-columns: 1fr auto 1fr; align-items: center; height: 17px; }
.quick { display: flex; align-items: center; gap: 6px; padding-left: 4px; }
.quick .near { margin-left: -2px; }
.doc { display: flex; align-items: center; gap: 5px; color: #444; }
.command { display: flex; align-items: center; gap: 3px; width: 94px; height: 13px; padding: 0 3px; border: 1px solid #aeb1b1; border-radius: 2px; background: #fff; }
.command input { border: 0; padding: 0; width: 100%; background: none; outline: 0; }
::placeholder { color: #8a8a8a; font-style: italic; opacity: 1; }
.account { display: flex; align-items: center; justify-content: flex-end; gap: 5px; padding-right: 8px; color: #333; }
.avatar { width: 12px; height: 12px; border-radius: 50%; background: #c5dbf0; color: #3b5f83; text-align: center; line-height: 12px; font-size: 5px; }
.account > button { width: 15px; display: flex; justify-content: center; }
.account .help { font-size: 8px; color: #888; }
.win { display: flex; gap: 17px; padding-left: 8px; }
.menu { display: flex; gap: 16px; padding-left: 10px; height: 13px; font-size: 7px; line-height: 13px; }
.menu a { height: 13px; }
.menu .on { border-bottom: 2px solid #1580c8; font-weight: 600; color: #222; }
.groups { display: flex; flex: 1; padding-top: 2px; }
.group { border-right: 1px solid #d4d6d6; display: flex; flex-direction: column; justify-content: space-between; }
.tools { display: grid; justify-content: center; align-items: start; }
.tools button { display: flex; flex-direction: column; align-items: center; line-height: 7px; white-space: nowrap; text-align: center; color: #333; }
.tools button > svg { width: 17px; height: 17px; margin-bottom: 2px; }
.tools .off { color: #aaa; }
.tools span { display: flex; align-items: center; height: 7px; }
.tools .c { width: 4px; height: 4px; }
.group h3 { display: flex; justify-content: center; position: relative; color: #666; }
.launch { width: 5px; height: 5px; position: absolute; right: 2px; top: 1px; }
.package { width: 164px; }
.package .tools { grid-template-columns: 22px 20px 24px 18px 46px 24px; }
.shareas { width: 141px; }
.shareas .tools { grid-template-columns: 20px 22px 22px 22px 28px 20px; }
.status { width: 27px; }
.manage { width: 113px; }
.manage .tools { grid-template-columns: 34px 30px 20px 24px; }
.saveas { width: 116px; }
.saveas .tools { grid-template-columns: 30px 18px 22px 16px 24px; }
.output { width: 82px; }
.output .tools { grid-template-columns: 20px 20px 34px; }
.collapse { margin: auto 3px 1px auto; transform: rotate(180deg); }

/* dock */
.dock { flex: 1; min-height: 0; display: flex; gap: 4px; padding: 3px 3px 4px 4px; }
.contents { flex: 0 0 168px; min-width: 0; background: #f7f9f8; border: 1px solid #dfe1e1; padding: 0 1px; display: flex; flex-direction: column; }
.panehead { display: flex; justify-content: space-between; align-items: center; height: 15px; }
.panehead h2 { font-size: 8px; font-weight: 400; color: #333; }
.contents h2 { padding-left: 1px; font-weight: 600; font-size: 7px; }
.paneicons { display: flex; gap: 4px; align-items: center; padding-right: 2px; color: #444; }
.searchrow { display: flex; align-items: center; gap: 3px; height: 13px; }
.search { flex: 1; min-width: 0; height: 13px; display: flex; align-items: center; gap: 5px; background: #fff; border: 1px solid #b4b6b6; padding: 0 2px; }
.search input { flex: 1; min-width: 0; border: 0; padding: 0; outline: 0; }
.views { display: flex; gap: 1px; margin: 4px 58px 0 6px; height: 18px; border-bottom: 1px solid #d9dbdb; }
.views button { width: 16px; height: 18px; padding: 0 2px; flex: none; }
.views svg { width: 12px; height: 12px; margin-bottom: 4px; }
.views .on { border-bottom: 2px solid #1580c8; }
.order { font-size: 7px; font-weight: 600; margin: 6px 0 2px 6px; line-height: 10px; }
.row, .leg { display: flex; align-items: center; height: 13px; color: #4c4c4c; }
.row label { display: flex; align-items: center; gap: 3px; }
.l0 { gap: 2px; }
.l1 { padding-left: 4px; }
.l2 { padding-left: 10px; }
.row i { width: 4px; flex: none; margin-right: 2px; height: 0; border: solid transparent; border-width: 2px 0 2px 3px; border-left-color: #bbb; }
.l0 i { margin-right: -1px; }
.row i.open { border: 0; width: 4px; height: 4px; background: linear-gradient(135deg, transparent 50%, #444 50%); }
.l0 svg { margin-right: 1px; }
.leg { padding-left: 19px; height: 11px; }
.leg.head { padding-left: 18px; }
.leg.tall { height: 13px; }
.sw { width: 9px; height: 2px; margin-right: 4px; background: #d11; }
.sw.gray { background: #999; height: 1px; }
.sw.blue { background: #6d9bd3; height: 1px; }
.sw.brown { background: #b2715a; }
.box { width: 11px; height: 9px; background: #ececec; border: 1px solid #bbb; }

input[type="checkbox"], input[type="radio"] { appearance: none; flex: none; width: 8px; height: 8px; border: 1px solid #8a8a8a; border-radius: 1px; background: #fff; display: grid; place-items: center; }
input[type="checkbox"]:checked::after { content: ""; width: 5px; height: 3px; border: solid #222; border-width: 0 0 1px 1px; transform: translateY(-1px) rotate(-45deg); }
input.soft { border-color: #b5b5b5; }
input.soft:checked::after { border-color: #777; }
input[type="radio"] { border-radius: 50%; border-color: #999; }
input[type="radio"]:checked::after { content: ""; width: 4px; height: 4px; border-radius: 50%; background: #333; }

/* map view */
.mapview { flex: 1; min-width: 0; display: flex; flex-direction: column; background: #fff; }
.maptabs { display: flex; height: 13px; flex: none; align-items: center; background: #e9e9e9; border-bottom: 1px solid #cfcfcf; gap: 11px; color: #333; }
.maptabs button { display: flex; align-items: center; gap: 3px; height: 12px; padding: 0 2px; white-space: nowrap; }
.maptabs .on { background: #d2d3d3; color: #666; margin-right: -9px; }
.more { margin: 0 2px 0 auto; }
.map { flex: 1; min-height: 0; width: 100%; background: #fff; }
.yakima { fill: none; stroke: #9da9b0; stroke-width: 3; stroke-linejoin: round; }
.yakima .inner { stroke: #d0e6f5; stroke-width: 1.500; }
.water path { fill: #cfe8fa; stroke: #9aa4aa; stroke-width: .7; }
.island path { fill: #e6e7e8; stroke: #a3a8ab; stroke-width: .6; }
.street { fill: none; stroke: #6c6c6c; stroke-width: .9; stroke-linejoin: round; }
.airport { fill: #666; }
.limit { fill: none; stroke: #f2590f; stroke-width: 1.500; stroke-dasharray: 2.500 2.500; }
.highway { fill: none; stroke: #c81a08; stroke-width: 2; stroke-linecap: round; }
.roadname { font: 10px "Noto Sans", sans-serif; fill: #111; }
.roadname .small { font-size: 9px; }
.rivername { font: italic 8px "Liberation Sans", sans-serif; fill: #0b5fe0; }
.rivername .big { font-size: 11px; }
.mapstatus { height: 13px; flex: none; display: flex; align-items: center; gap: 5px; background: #f7f9f8; padding: 0 3px; color: #555; white-space: nowrap; }
.scale { appearance: none; width: 52px; height: 11px; border: 1px solid #aaa; border-radius: 0; padding: 0 2px; background: linear-gradient(#666, #666) no-repeat right 2px center / 3px 1px #fff; }
.toggles { display: flex; align-items: center; }
.toggles svg { width: 10px; height: 10px; }
.toggles .s6 { width: 6px; height: 6px; margin-left: 3px; }
.toggles .lit { background: #b9dbf2; outline: 1px solid #62a4d2; outline-offset: -1px; }
.coords { flex: 1; display: flex; align-items: center; justify-content: center; gap: 4px; border-left: 1px solid #ccc; }
.sel, .cell { border-left: 1px solid #bbb; padding-left: 4px; display: flex; align-items: center; gap: 2px; height: 8px; }
.sel { color: #aaa; }

/* share pane */
.side { flex: 0 1 327px; display: flex; flex-direction: column; margin-top: -1px; }
.share { flex: 1; min-height: 0; display: flex; flex-direction: column; border: 1px solid #62addd; background: #f7f9f8; padding: 0 2px 9px 3px; }
.share h2 { color: #2387c9; }
.share .panehead { height: 16px; }
.share .paneicons { padding-right: 0; }
.q { font-size: 8px; }
.sharing { text-align: center; font-size: 7px; line-height: 8px; }
.steps { display: flex; gap: 4px; margin-top: 8px; font-size: 7px; line-height: 11px; }
.steps a { height: 12px; }
.steps .on { border-bottom: 1px solid #1580c8; font-weight: 600; }
.share h3 { font-size: 7px; line-height: 10px; font-weight: 600; display: flex; align-items: center; gap: 3px; }
.share .body { padding: 0 0 0 3px; }
.fields { padding-left: 8px; display: flex; flex-direction: column; }
.fields label { line-height: 8px; margin: 4px 0 3px; }
.share .details { margin: 8px 0 0; }
.fields input, .fields textarea { border: 1px solid #a9abab; background: #fff; width: 100%; display: block; outline: 0; resize: none; }
.fields input { height: 11px; padding: 0 2px; color: #222; margin-bottom: -1px; background: linear-gradient(#e33, #e33) no-repeat 2px 8px / 56px 1px #fff; }
.fields textarea { height: 26px; padding: 2px; margin-bottom: -1px; }
.ltype { margin-top: 12px; }
.opts { padding-left: 8px; display: flex; flex-direction: column; gap: 4px; margin-top: 3px; color: #333; }
.opts label { display: flex; align-items: center; gap: 3px; line-height: 8px; }
.opts .sub { padding-left: 8px; color: #999; }
.loc { margin-top: 5px; }
.folder { display: flex; align-items: center; gap: 4px; }
.folder > svg { width: 9px; height: 8px; }
.selwrap { flex: 1; position: relative; }
.selwrap::after, .actions em { content: ""; border: solid transparent; border-width: 3px 2px 0; border-top-color: #666; }
.selwrap::after { position: absolute; right: 2px; top: 5px; }
.selwrap select { appearance: none; display: block; width: 100%; height: 12px; border: 1px solid #a9abab; background: #fff; padding: 0 2px; font-style: italic; color: #888; border-radius: 0; }
.with { margin-top: 5px; }
.with + .opts { margin-top: 5px; }
.groupsbtn { margin: 2px 0 0 8px; width: 39px; height: 10px; display: flex; align-items: center; justify-content: space-between; padding: 0 2px 0 5px; background: #dfe0e1; border: 1px solid #c4c6c7; color: #333; }
.finish { margin-top: auto; }
.actions { display: flex; gap: 2px; padding: 7px 2px 0; }
.actions button { width: 46px; height: 13px; border: 1px solid #999; background: #fff; display: flex; align-items: center; justify-content: center; gap: 2px; font-size: 7px; }
.actions .wide { width: 52px; }
.actions em { margin-left: 6px; }
.panes { display: flex; height: 11px; flex: none; line-height: 11px; white-space: nowrap; }
.panes a { padding: 0 3px; }
.panes .on { background: #f7f9f8; border: 1px solid #62addd; border-top: 0; color: #2387c9; margin-top: -1px; padding: 0 2px; }

/* taskbar */
.taskbar { height: 20px; flex: none; background: #00223f; display: flex; color: #e5ebf0; }
.apps { display: flex; width: 178px; }
.apps button { flex: 1; display: grid; place-items: center; color: #e5ebf0; }
.apps svg { width: 8px; height: 8px; }
.apps .s10 { width: 11px; height: 11px; }
.apps .on { background: #004f8c; border-bottom: 1px solid #79bdf0; }
.apps .running { border-bottom: 1px solid #79bdf0; }
.tray { margin-left: auto; display: flex; align-items: center; gap: 5px; padding-right: 12px; }
.up { transform: rotate(180deg); }
.clock { text-align: center; line-height: 9px; width: 26px; }
.note { width: 9px; height: 9px; margin-left: 5px; }
```
